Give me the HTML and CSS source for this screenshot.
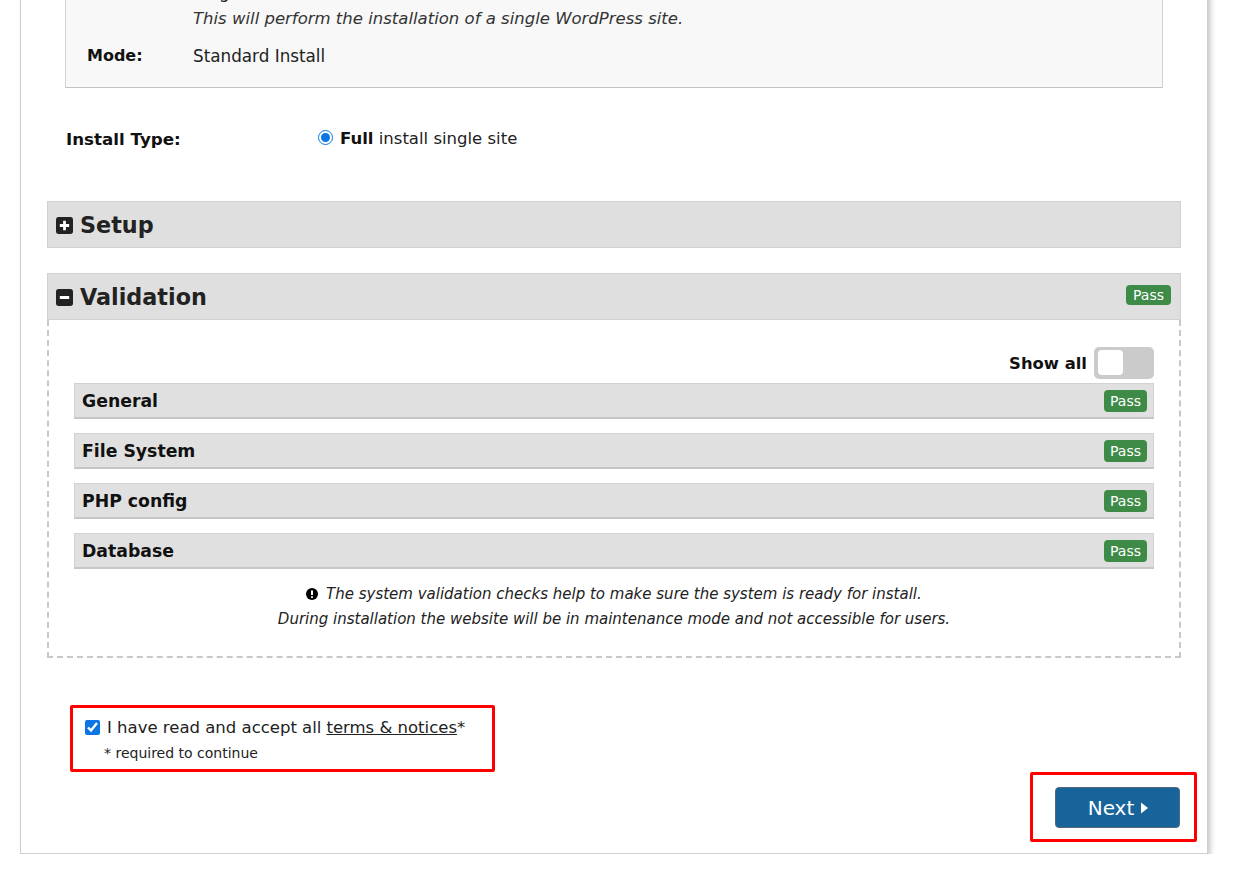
FILE: index.html
```html
<!DOCTYPE html>
<html lang="en">
<head>
<meta charset="utf-8">
<title>Installer - Step 1</title>
<link rel="stylesheet" href="styles.css">
</head>
<body>
<div class="page">
  <div class="card">
    <div class="overview">
      <div class="ov-row ov-first"><span class="ov-label">Install:</span><span class="ov-value">Single Site</span></div>
      <div class="ov-row"><span class="ov-label"></span><span class="ov-desc">This will perform the installation of a single WordPress site.</span></div>
      <div class="ov-row ov-mode"><span class="ov-label">Mode:</span><span class="ov-value">Standard Install</span></div>
    </div>

    <div class="install-type">
      <span class="it-label">Install Type:</span>
      <label class="it-option"><input type="radio" name="itype" checked><b>Full</b>&nbsp;install single site</label>
    </div>

    <section class="panel">
      <div class="panel-head">
        <svg class="toggle-icon" width="17" height="17" viewBox="0 0 16 16"><rect x="0" y="0" width="16" height="16" rx="2.5" fill="#222"/><path d="M8 3.6v8.8M3.6 8h8.8" stroke="#fff" stroke-width="2.6"/></svg>
        <span class="panel-title">Setup</span>
      </div>
    </section>

    <section class="panel panel-validation">
      <div class="panel-head">
        <svg class="toggle-icon" width="17" height="17" viewBox="0 0 16 16"><rect x="0" y="0" width="16" height="16" rx="2.5" fill="#222"/><path d="M3.6 8h8.8" stroke="#fff" stroke-width="2.8"/></svg>
        <span class="panel-title">Validation</span>
        <span class="badge badge-head">Pass</span>
      </div>
      <div class="panel-body">
        <div class="show-all">
          <span class="show-all-label">Show all</span>
          <span class="switch"><span class="knob"></span></span>
        </div>
        <div class="check-row"><span class="check-title">General</span><span class="badge">Pass</span></div>
        <div class="check-row"><span class="check-title">File System</span><span class="badge">Pass</span></div>
        <div class="check-row"><span class="check-title">PHP config</span><span class="badge">Pass</span></div>
        <div class="check-row"><span class="check-title">Database</span><span class="badge">Pass</span></div>
        <p class="notice">
          <svg class="notice-icon" width="12" height="12" viewBox="0 0 12 12"><circle cx="6" cy="6" r="6" fill="#000"/><path d="M6 2.4v4.6" stroke="#fff" stroke-width="2"/><circle cx="6" cy="9.1" r="1.05" fill="#fff"/></svg>
          The system validation checks help to make sure the system is ready for install.<br>
          During installation the website will be in maintenance mode and not accessible for users.
        </p>
      </div>
    </section>

    <div class="accept">
      <label class="accept-line"><input type="checkbox" checked>I have read and accept all <a class="terms" href="#">terms &amp; notices</a>*</label>
      <div class="required">* required to continue</div>
    </div>

    <div class="footer">
      <div class="next-wrap">
        <button class="btn-next" type="button">Next <svg width="9" height="14" viewBox="0 0 9 14"><path d="M1 1.5L8 7 1 12.5z" fill="#fff"/></svg></button>
      </div>
    </div>
  </div>
</div>
</body>
</html>
```

FILE: styles.css
```css
* { box-sizing: border-box; }

html, body {
  margin: 0;
  padding: 0;
  background: #fff;
}

body {
  font-family: "DejaVu Sans", Verdana, sans-serif;
  color: #222;
  font-size: 16px;
}

.page {
  margin-top: -55px;
  padding-left: 20px;
}

.card {
  width: 1188px;
  background: #fff;
  border: 1px solid #cfcfcf;
  padding: 20px 26px 11px 26px;
  box-shadow: 3px 4px 6px -1px rgba(0, 0, 0, 0.25);
}

/* overview box */
.overview {
  margin: 0 18px;
  background: #f8f8f8;
  border: 1px solid #d2d2d2;
  border-bottom-color: #c4c4c4;
  padding: 16px 20px 19px 21px;
}

.ov-row {
  display: grid;
  grid-template-columns: 106px 1fr;
  line-height: 24px;
}

.ov-first {
  font-size: 16.5px;
  margin: -3px 0 3px 0;
}

.ov-label {
  font-weight: bold;
  color: #111;
}

.ov-value {
  color: #222;
  font-size: 16.8px;
}

.ov-desc {
  font-style: italic;
  font-size: 16.5px;
  color: #333;
}

.ov-mode {
  margin-top: 13px;
}

/* install type */
.install-type {
  margin-top: 39px;
  padding-left: 19px;
  display: flex;
  line-height: 24px;
}

.it-label {
  width: 252px;
  font-weight: bold;
  font-size: 16.7px;
  color: #111;
}

.it-option {
  display: flex;
  align-items: center;
  color: #222;
  font-size: 16.5px;
}

.it-option input {
  width: 15px;
  height: 15px;
  margin: 0 7px 3px 0;
  accent-color: #0b75e6;
}

.it-option b {
  color: #111;
}

/* panels */
.panel {
  margin-top: 50px;
}

.panel-validation {
  margin-top: 25px;
}

.panel-head {
  height: 47px;
  background: #dfdfdf;
  border: 1px solid #d0d0d0;
  display: flex;
  align-items: center;
  padding: 0 9px 0 8px;
}

.toggle-icon {
  flex: none;
  margin-right: 7px;
  margin-top: 1px;
}

.panel-title {
  font-size: 22.3px;
  font-weight: bold;
  color: #222;
  line-height: 28px;
}

.badge {
  margin-left: auto;
  background: #3e8a47;
  color: #fff;
  font-size: 14px;
  line-height: 22px;
  height: 22px;
  padding: 0 6px;
  border-radius: 4px;
}

.badge-head {
  line-height: 20px;
  height: 20px;
  padding: 0 7px;
  margin-top: -4px;
}

.panel-body {
  border: 2px dashed #c8c8c8;
  border-top: none;
  padding: 27px 25px 24px 25px;
}

.show-all {
  display: flex;
  justify-content: flex-end;
  align-items: center;
  height: 32px;
  margin-bottom: 4px;
}

.show-all-label {
  font-weight: bold;
  color: #111;
  margin-right: 7px;
  font-size: 16.4px;
}

.switch {
  width: 60px;
  height: 32px;
  background: #cbcbcb;
  border-radius: 5px;
  position: relative;
}

.knob {
  position: absolute;
  left: 4px;
  top: 3px;
  width: 25px;
  height: 25px;
  background: #fff;
  border-radius: 4px;
}

.check-row {
  height: 36px;
  background: #e0e0e0;
  border: 1px solid #d2d2d2;
  border-bottom: 2px solid #c6c6c6;
  display: flex;
  align-items: center;
  padding: 0 6px 0 7px;
  margin-bottom: 14px;
}

.check-row:last-of-type {
  margin-bottom: 0;
}

.check-title {
  font-size: 17.3px;
  font-weight: bold;
  color: #111;
}

.notice {
  margin: 13px 0 0 0;
  text-align: center;
  font-style: italic;
  font-size: 15px;
  line-height: 25px;
  color: #222;
}

.notice-icon {
  vertical-align: -1px;
  margin-right: 3px;
}

/* accept box */
.accept {
  margin: 47px 0 0 23px;
  width: 425px;
  border: 3px solid #ff0000;
  border-radius: 2px;
  padding: 8px 10px 6px 12px;
}

.accept-line {
  display: flex;
  align-items: center;
  line-height: 24px;
  font-size: 16.5px;
  color: #222;
}

.accept-line input {
  width: 15px;
  height: 15px;
  margin: 0 7px 2px 0;
  accent-color: #0b75e6;
}

.terms {
  color: #222;
  text-decoration: underline;
  margin-left: 5px;
}

.required {
  margin-top: 3px;
  padding-left: 19px;
  font-size: 14px;
  line-height: 20px;
  color: #222;
}

/* footer */
.footer {
  display: flex;
  justify-content: flex-end;
  margin-right: -16px;
}

.next-wrap {
  border: 3px solid #ff0000;
  border-radius: 2px;
  padding: 12px 14px 11px 22px;
}

.btn-next {
  width: 125px;
  height: 41px;
  background: #17649b;
  border: 1px solid #56677a;
  border-radius: 4px;
  color: #fff;
  font-family: "DejaVu Sans", Verdana, sans-serif;
  font-size: 20px;
  display: flex;
  align-items: center;
  justify-content: center;
  gap: 6px;
  padding: 0 0 0 2px;
  cursor: pointer;
}
```
